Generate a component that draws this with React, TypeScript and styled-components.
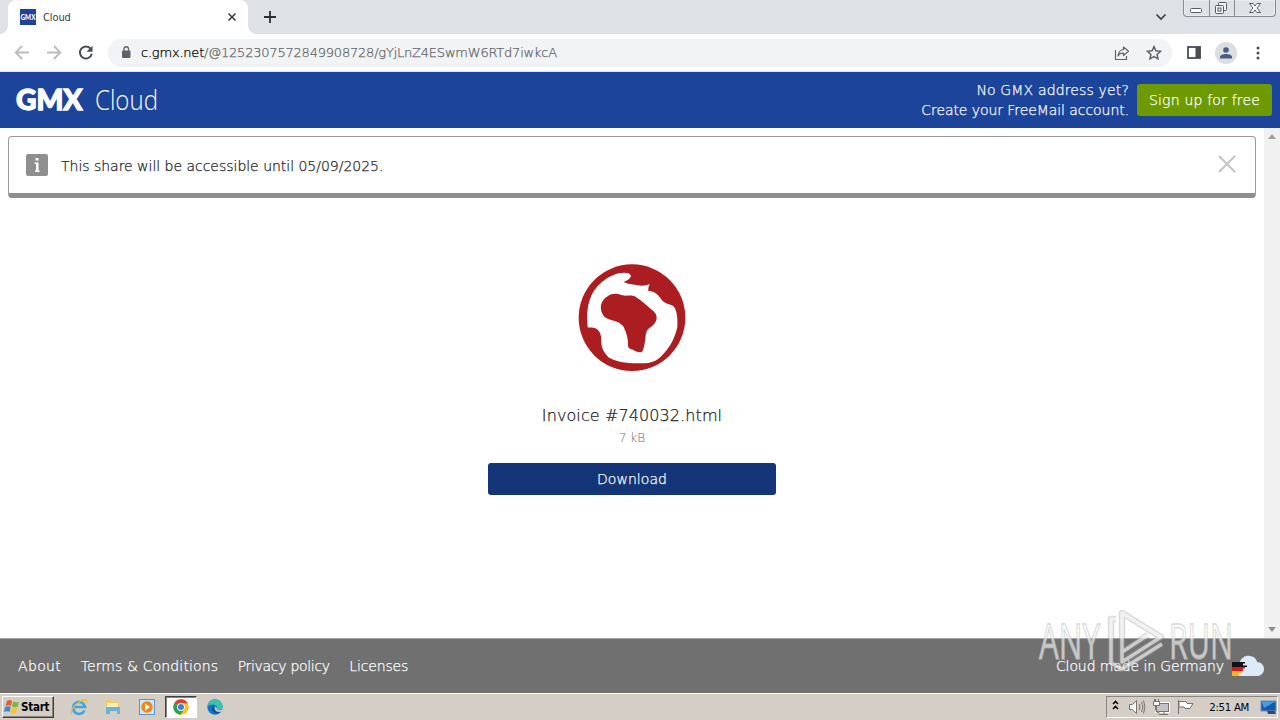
import React from 'react';
import styled, { createGlobalStyle } from 'styled-components';

const Global = createGlobalStyle`
  * { box-sizing: border-box; }
  body { margin: 0; overflow: hidden; background: #fff; }
  button { font: inherit; border: 0; padding: 0; background: none; color: inherit; }
  svg { display: block; flex: none; }
`;

const verdana = `"DejaVu Sans Light", "DejaVu Sans", sans-serif`;
const tahoma = `"DejaVu Sans Condensed", "DejaVu Sans", sans-serif`;

const Screen = styled.div`
  position: relative;
  width: 1280px;
  height: 720px;
  display: flex;
  flex-direction: column;
  overflow: hidden;
  font-family: ${verdana};
`;

const Label = styled.span<{ $size?: number; $track?: number; $color?: string; $weight?: number }>`
  font-size: ${p => p.$size ?? 14}px;
  letter-spacing: ${p => p.$track ?? 0}px;
  color: ${p => p.$color ?? 'inherit'};
  -webkit-text-stroke: ${p => p.$weight ?? 0.25}px;
  white-space: nowrap;
`;

const TabStrip = styled.div`
  height: 34px;
  flex: none;
  display: flex;
  background: #dee1e6;
  padding-left: 8px;
`;

const Tab = styled.div`
  position: relative;
  width: 240px;
  height: 34px;
  background: #fff;
  border-radius: 8px 8px 0 0;
  display: flex;
  align-items: center;
  padding: 0 10px 0 12px;
  font-family: ${tahoma};
  &::before, &::after {
    content: '';
    position: absolute;
    bottom: 0;
    width: 8px;
    height: 8px;
  }
  &::before { left: -8px; background: radial-gradient(circle at 0 0, transparent 7.5px, #fff 8px); }
  &::after { right: -8px; background: radial-gradient(circle at 100% 0, transparent 7.5px, #fff 8px); }
`;

const TabTitle = styled(Label)`
  flex: 1;
  margin-left: 7px;
`;

const NewTab = styled.button`
  width: 28px;
  margin-left: 8px;
  display: grid;
  place-items: center;
`;

const WindowArea = styled.div`
  margin-left: auto;
  display: flex;
  align-items: flex-start;
`;

const TabSearch = styled.div`
  padding: 13px 16px 0 0;
`;

const WindowButtons = styled.div`
  width: 93px;
  height: 17px;
  margin-right: 4px;
  border: 1px solid #888b91;
  border-top: 0;
  border-radius: 0 0 4px 4px;
  box-shadow: inset 0 0 0 1px #e9ebef;
  display: grid;
  grid-template-columns: 25px 25px 1fr;
  > span { display: grid; place-items: center; }
  > span + span { border-left: 1px solid #888b91; }
`;

const Toolbar = styled.div`
  height: 38px;
  flex: none;
  display: flex;
  align-items: center;
  background: #fff;
  border-bottom: 1px solid #dbe6ee;
  padding: 0 13px 0 14px;
`;

const NavButtons = styled.div`
  display: flex;
  gap: 16px;
  margin-right: 14px;
`;

const AddressBar = styled.div`
  width: 1064px;
  height: 28px;
  border-radius: 14px;
  background: #f1f3f4;
  display: flex;
  align-items: center;
  padding: 0 10px 0 12px;
`;

const Url = styled(Label)`
  flex: 1;
  margin-left: 9px;
  b { font-weight: inherit; color: #000; }
`;

const AddressIcons = styled.div`
  display: flex;
  gap: 16px;
`;

const ToolbarIcons = styled.div`
  display: flex;
  align-items: center;
  margin-left: 14px;
`;

const Avatar = styled.div`
  width: 22px;
  height: 22px;
  margin: 0 15px 0 13px;
  border-radius: 50%;
  background: #dadde2;
  display: grid;
  place-items: center;
`;

const Header = styled.header`
  height: 56px;
  flex: none;
  background: #1c449b;
  color: #fff;
  display: flex;
  align-items: center;
  padding: 0 8px 0 15px;
`;

const Promo = styled.div`
  margin-left: auto;
  margin-right: 8px;
  display: flex;
  flex-direction: column;
  align-items: flex-end;
  line-height: 20px;
`;

const Button = styled.button<{ $width: number; $bg: string }>`
  width: ${p => p.$width}px;
  height: 32px;
  border-radius: 3px;
  background: ${p => p.$bg};
  color: #fff;
  padding-bottom: 2px;
`;

const Body = styled.div`
  height: 510px;
  flex: none;
  display: flex;
`;

const Main = styled.main`
  flex: 1;
  display: flex;
  flex-direction: column;
  align-items: center;
  padding: 8px 8px 0;
`;

const Notice = styled.div`
  width: 100%;
  height: 62px;
  flex: none;
  display: flex;
  align-items: center;
  border: 1px solid #999;
  border-bottom: 5px solid #8f8f8f;
  border-radius: 4px;
  padding: 0 19px 0 17px;
  color: #222;
`;

const NoticeText = styled(Label)`
  flex: 1;
  margin-left: 13px;
  padding-top: 2px;
`;

const Dismiss = styled.button`
  padding-bottom: 2px;
`;

const FileCard = styled.section`
  display: flex;
  flex-direction: column;
  align-items: center;
  padding-top: 52px;
`;

const FileName = styled(Label)`
  height: 24px;
  line-height: 24px;
  margin-top: 18px;
`;

const FileSize = styled(Label)`
  line-height: 20px;
  margin-bottom: 15px;
`;

const Scrollbar = styled.div`
  width: 16px;
  background: #f1f1f1;
  display: flex;
  flex-direction: column;
  justify-content: space-between;
  align-items: center;
  padding: 6px 0;
`;

const Footer = styled.footer`
  height: 55px;
  flex: none;
  background: #707070;
  border-top: 1px solid #a5a5a5;
  border-bottom: 1px solid #707070;
  color: #fff;
  display: flex;
  align-items: center;
  padding: 0 16px 0 18px;
`;

const FooterLinks = styled.nav`
  display: flex;
  gap: 19.5px;
  flex: 1;
`;

const Made = styled.div`
  display: flex;
  align-items: center;
  gap: 8px;
`;

const Taskbar = styled.div`
  height: 27px;
  flex: none;
  background: #d4cec6;
  border-top: 1px solid #fff;
  display: flex;
  align-items: center;
  padding: 0 2px;
  font-family: ${tahoma};
  color: #000;
`;

const Start = styled.button`
  width: 52px;
  height: 22px;
  border: 1px solid;
  border-color: #fff #404040 #404040 #fff;
  box-shadow: inset -1px -1px #8a857e;
  display: flex;
  align-items: center;
  gap: 1px;
  padding-left: 1px;
  font-weight: bold;
`;

const Apps = styled.div`
  display: flex;
  align-items: center;
  margin-left: 8px;
`;

const AppSlot = styled.div<{ $active?: boolean }>`
  width: 34px;
  height: 22px;
  display: grid;
  place-items: center;
  ${p => p.$active && `
    width: 32px; margin: 0 1px;
    background: #fff;
    border: 1px solid;
    border-color: #404040 #fff #fff #404040;
    box-shadow: inset 1px 1px #8a857e;
  `}
`;

const Tray = styled.div`
  width: 172px;
  height: 22px;
  margin-left: auto;
  border: 1px solid;
  border-color: #8a857e #fff #fff #8a857e;
  display: flex;
  align-items: center;
  padding: 0 0 0 5px;
`;

const Clock = styled(Label)`
  margin-left: auto;
  margin-right: 11px;
`;

const Watermark = styled.svg`
  position: absolute;
  left: 1030px;
  top: 590px;
`;

const grey = { fill: 'none', stroke: '#5f6368', strokeWidth: 1.8 };

const footerLinks = [
  { text: 'About', track: 0.35 },
  { text: 'Terms & Conditions', track: 0.13 },
  { text: 'Privacy policy', track: -0.3 },
  { text: 'Licenses', track: -0.15 },
];

export default function App() {
  return (
    <Screen>
      <Global />
      <TabStrip>
        <Tab>
          <svg width="16" height="16">
            <rect width="16" height="16" fill="#1c449b" />
            <text x="0.5" y="10.5" fontFamily="Lato, sans-serif" fontWeight="900" fontSize="7" fill="#fff" textLength="15" lengthAdjust="spacingAndGlyphs">GMX</text>
          </svg>
          <TabTitle $size={11} $track={-0.1} $weight={0} $color="#3c4043">Cloud</TabTitle>
          <svg width="12" height="12"><path d="M2.5 2.5l7 7m0-7l-7 7" stroke="#3c4043" strokeWidth="1.6" /></svg>
        </Tab>
        <NewTab><svg width="14" height="14"><path d="M7 1v12M1 7h12" stroke="#2c2f33" strokeWidth="1.8" /></svg></NewTab>
        <WindowArea>
          <TabSearch><svg width="12" height="8"><path d="M1.5 1.5L6 6l4.5-4.5" fill="none" stroke="#3c4043" strokeWidth="1.7" /></svg></TabSearch>
          <WindowButtons>
            <span><svg width="24" height="16"><rect x="5.500" y="8.500" width="11" height="4" rx="1" fill="#fff" stroke="#555a64" /></svg></span>
            <span><svg width="24" height="16" fill="#f4f5f7" stroke="#555a64"><rect x="8.500" y="2.500" width="8" height="8" rx="1" /><rect x="5.500" y="5.500" width="8" height="8" rx="1" /><rect x="8" y="8" width="3" height="3" /></svg></span>
            <span><svg width="24" height="16"><path d="M6.500 3.500h3.500l2 2.500 2-2.500h3.500l-3.500 4.500 3.500 4.500h-3.500l-2-2.500-2 2.500H6.500L10 8z" fill="#fff" stroke="#555a64" /></svg></span>
          </WindowButtons>
        </WindowArea>
      </TabStrip>

      <Toolbar>
        <NavButtons>
          <svg width="16" height="16"><path d="M15 7.500H2m6-6.500L1.700 7.500 8 14" fill="none" stroke="#babcbe" strokeWidth="1.800" /></svg>
          <svg width="16" height="16"><path d="M1 7.500h13M8 1L14.300 7.500 8 14" fill="none" stroke="#babcbe" strokeWidth="1.800" /></svg>
          <svg width="16" height="16"><path d="M12.700 3.800A6 6 0 1 0 13.800 8.800" fill="none" stroke="#4a4d51" strokeWidth="2" /><path d="M14.500.8v6H8.500z" fill="#4a4d51" /></svg>
        </NavButtons>
        <AddressBar>
          <svg width="12" height="14"><rect x="2" y="4.500" width="8.500" height="7.500" rx="1" fill="#5f6368" /><path d="M4 5V3a2.250 2.250 0 0 1 4.500 0v2" fill="none" stroke="#5f6368" strokeWidth="1.300" /></svg>
          <Url $size={13} $track={-0.21} $color="#5f6368"><b>c.gmx.net</b>/@1252307572849908728/gYjLnZ4ESwmW6RTd7iwkcA</Url>
          <AddressIcons>
            <svg width="16" height="16" fill="none" stroke="#5f6368" strokeWidth="1.200"><path d="M1.500 5v9.500h11V11" /><path d="M9.500 2l5 4.300-5 4.200V8.200C7 8 5 9 4 11c.3-3.500 2-6 5.500-6.500z" strokeLinejoin="round" /></svg>
            <svg width="16" height="16"><path d="M8 1.600l1.900 4.200 4.600.5-3.400 3.100.9 4.500L8 11.600l-4 2.300.9-4.500-3.400-3.100 4.600-.5z" {...grey} strokeWidth="1.500" /></svg>
          </AddressIcons>
        </AddressBar>
        <ToolbarIcons>
          <svg width="16" height="16"><rect x="2" y="2" width="12" height="11" {...grey} stroke="#4a4d51" /><rect x="9.500" y="2" width="5" height="11" fill="#4a4d51" /></svg>
          <Avatar><svg width="14" height="14" fill="#4c5c7c"><circle cx="7" cy="4" r="2.800" /><path d="M1 12.500V11c0-2 3-3 6-3s6 1 6 3v1.500z" /></svg></Avatar>
          <svg width="12" height="16" fill="#4a4d51"><circle cx="6" cy="3" r="1.500" /><circle cx="6" cy="8" r="1.500" /><circle cx="6" cy="13" r="1.500" /></svg>
        </ToolbarIcons>
      </Toolbar>

      <Header>
        <svg width="160" height="48" fill="#fff">
          <text x="1" y="34" fontFamily="Lato, sans-serif" fontWeight="900" fontSize="28.500" stroke="#fff" strokeWidth="1.300" textLength="66.500" lengthAdjust="spacingAndGlyphs">GMX</text>
          <text x="80" y="34" fontFamily="'Open Sans', sans-serif" fontWeight="300" fontSize="28" textLength="63" lengthAdjust="spacingAndGlyphs">Cloud</text>
        </svg>
        <Promo>
          <Label $track={0.15}>No GMX address yet?</Label>
          <Label $track={-0.07}>Create your FreeMail account.</Label>
        </Promo>
        <Button $width={135} $bg="#6c9a00"><Label $track={0.2}>Sign up for free</Label></Button>
      </Header>

      <Body>
        <Main>
          <Notice>
            <svg width="22" height="22"><rect width="22" height="22" rx="2" fill="#8f8f8f" /><path d="M9.500 4h3v2.500h-3zM8.500 8.500h4v8h1V18H9v-1.500h1V10H8.500z" fill="#fff" /></svg>
            <NoticeText $track={-0.02}>This share will be accessible until 05/09/2025.</NoticeText>
            <Dismiss><svg width="18" height="18"><path d="M1 1l16 16M17 1L1 17" stroke="#c4c4c4" strokeWidth="2" /></svg></Dismiss>
          </Notice>
          <FileCard>
            <svg width="144" height="136" viewBox="0 0 432 408">
              <circle cx="216" cy="203" r="160" fill="#ac1d22" />
              <path fill="#fff" d="M83 232C76 168 91 124 126 96C151 74 185 64 205 70C218 76 215 86 191 96C205 103 222 104 233 106C248 108 258 107 269 102Q264 113 265 123C290 124 296 139 305 149C315 162 329 161 341 169C352 185 353 206 352 232C343 269 329 293 307 315C290 334 273 340 246 340C200 341 168 336 145 322C134 309 124 296 124 277C124 258 122 246 110 237C101 231 90 235 83 232Z" />
              <path fill="#ac1d22" d="M144 138C156 128 173 130 188 136C199 139 214 133 224 139C244 150 261 168 277 181C290 191 294 204 286 217C279 231 264 232 259 247C255 263 256 285 248 302C243 311 228 305 219 299C211 297 205 295 204 288C205 268 200 249 191 231C181 215 164 213 151 209C130 204 120 186 123 165Q127 148 144 138Z" />
            </svg>
            <FileName $size={16} $track={0.1} $color="#222">Invoice #740032.html</FileName>
            <FileSize $size={12} $weight={0.1} $color="#808080">7 kB</FileSize>
            <Button $width={288} $bg="#143577"><Label $track={0.05}>Download</Label></Button>
          </FileCard>
        </Main>
        <Scrollbar>
          <svg width="8" height="5"><path d="M0 5l4-5 4 5z" fill="#a0a0a0" /></svg>
          <svg width="8" height="5"><path d="M0 0l4 5 4-5z" fill="#909090" /></svg>
        </Scrollbar>
      </Body>

      <Footer>
        <FooterLinks>
          {footerLinks.map(l => <Label key={l.text} $track={l.track}>{l.text}</Label>)}
        </FooterLinks>
        <Made>
          <Label $track={-0.1}>Cloud made in Germany</Label>
          <svg width="32" height="22">
            <path d="M5 21C-1 20-1 11 7 9C9 2 14 0 18 1c4 0 7 4 7 6 4 0 7 3 7 7s-3 7-7 7z" fill="#dcebf7" />
            <path d="M0 7h13v1.500h-2v2h4V12H0z" fill="#111" /><path d="M0 12h13v1.500h-2V16H0z" fill="#d21a20" /><path d="M0 16h10v2H7v3H0z" fill="#f5b52a" />
          </svg>
        </Made>
      </Footer>

      <Taskbar>
        <Start>
          <svg width="16" height="16"><path d="M3 2q3-2 5 0L7 7Q4 5.500 1.500 7z" fill="#e8632c" /><path d="M9 2.500q3 1.500 6 .2L13.500 8Q11 9 8 7.500z" fill="#7ab648" /><path d="M1.200 8Q4 6.500 6.700 8L5.500 13Q3 11.500 0 13z" fill="#3f86d6" /><path d="M7.700 8.500q3 1.500 5.500.5L12 14q-3 1-5.500-.5z" fill="#f7c531" /></svg>
          <Label $size={11.5} $track={-0.25} $weight={0}>Start</Label>
        </Start>
        <Apps>
          <AppSlot>
            <svg width="18" height="18" fill="none"><path d="M14.500 12.500A6 6 0 1 1 15 9H4.500" stroke="#42a5e0" strokeWidth="2.600" /><path d="M2 16C-1 14 4 7 10 3.500C14 1 18 1 16.500 4.500" stroke="#e6bd3c" strokeWidth="1.300" /></svg>
          </AppSlot>
          <AppSlot>
            <svg width="16" height="16"><path d="M1 1h5l1 2h7v10H1z" fill="#e9cc6b" /><path d="M2 4h11v4H2z" fill="#f8eeb5" /><path d="M1 8h14v7h-3v-3H5v3H1z" fill="#69b2d8" /></svg>
          </AppSlot>
          <AppSlot>
            <svg width="16" height="16"><rect x=".5" y=".5" width="15" height="15" fill="#cfe4f5" stroke="#5997cc" /><circle cx="8" cy="8" r="5.700" fill="#f08519" /><path d="M6 4.500v7l5-3.500z" fill="#fff" /></svg>
          </AppSlot>
          <AppSlot $active>
            <svg width="16" height="16"><circle cx="8" cy="8" r="7.700" fill="#fbc116" /><path d="M8 8L1.300 4.200A7.700 7.700 0 0 1 14.700 4.200H8z" fill="#e33b2e" /><path d="M1.300 4.200A7.700 7.700 0 0 0 7.500 15.700L11.300 10 8 8z" fill="#2da14c" /><circle cx="8" cy="8" r="3.900" fill="#fff" /><circle cx="8" cy="8" r="3" fill="#3c7de6" /></svg>
          </AppSlot>
          <AppSlot>
            <svg width="16" height="16"><circle cx="8" cy="8" r="7.700" fill="#1276c8" /><path d="M.4 7A7.700 7.700 0 0 1 15.700 8c0 3-4 4-6 2.500C11 8 9 5.500 6 5.500S1 7 .4 7z" fill="#3bc5a6" /><path d="M6 7c-3 5 2 9 7.500 6.500C9 14 7 11 8 9z" fill="#0c4d98" /><path d="M8.500 7.500c2 2 1 3 2 3.500s4 .5 5-1v2l-3 1c-3 0-5-2-5-4z" fill="#d4cec6" /></svg>
          </AppSlot>
        </Apps>
        <Tray>
          <svg width="84" height="18" fill="none">
            <path d="M1 7l2.500-2.500L6 7M1 12l2.500-2.500L6 12" transform="translate(0 -1)" stroke="#000" strokeWidth="1.600" />
            <g stroke="#77736d"><path d="M17.500 6.500h3l4-4v13l-4-4h-3z" fill="#fff" /><path d="M27 6q2 3 0 6M29.500 4q3 5 0 10M31.500 2.500q3 6.500 0 13" /><rect x="44.500" y="5.500" width="12" height="8" fill="#b9b9b9" stroke="#fff" strokeWidth="3" /><rect x="44.500" y="5.500" width="12" height="8" fill="#c4c4c4" /><path d="M47 16.500h9M52 14v2M43.500 1v10q0 4 4 4" /><path d="M41.500 3.500h6v4h-6zM42.500 1v2m4-2v2" fill="#fff" /><path d="M66.500 2v14M67 3.500h7l1 2h6l-3 5h-5l-1-1.500h-5z" fill="#fff" /></g>
          </svg>
          <Clock $size={11.3} $track={-0.3} $weight={0}>2:51 AM</Clock>
          <svg width="17" height="16"><rect x="1" y="2" width="15" height="10" fill="#1659a8" stroke="#6a93bd" /><path d="M1.500 2.500h14L4 9z" fill="#4a9ae0" /><path d="M7 12h8l1 3H8z" fill="#324b68" /></svg>
        </Tray>
      </Taskbar>

      <Watermark width="240" height="110">
        <g fill="#fff" fillOpacity=".65" stroke="#bbb" strokeOpacity=".5" strokeWidth="1.800" fontFamily="'Open Sans', sans-serif" fontWeight="400">
          <text x="9" y="69" fontSize="50" textLength="61" lengthAdjust="spacingAndGlyphs">ANY</text>
          <text x="139" y="69" fontSize="50" textLength="64" lengthAdjust="spacingAndGlyphs">RUN</text>
        </g>
        <g fill="none" strokeLinejoin="round">
          <path d="M86 29h-5v44l11 6 40-25M92 62V23l39 24-39 25V62l26-17" stroke="#999" strokeOpacity=".35" strokeWidth="6.500" />
          <path d="M86 29h-5v44l11 6 40-25M92 62V23l39 24-39 25V62l26-17" stroke="#fff" strokeOpacity=".6" strokeWidth="3.500" />
        </g>
      </Watermark>
    </Screen>
  );
}
